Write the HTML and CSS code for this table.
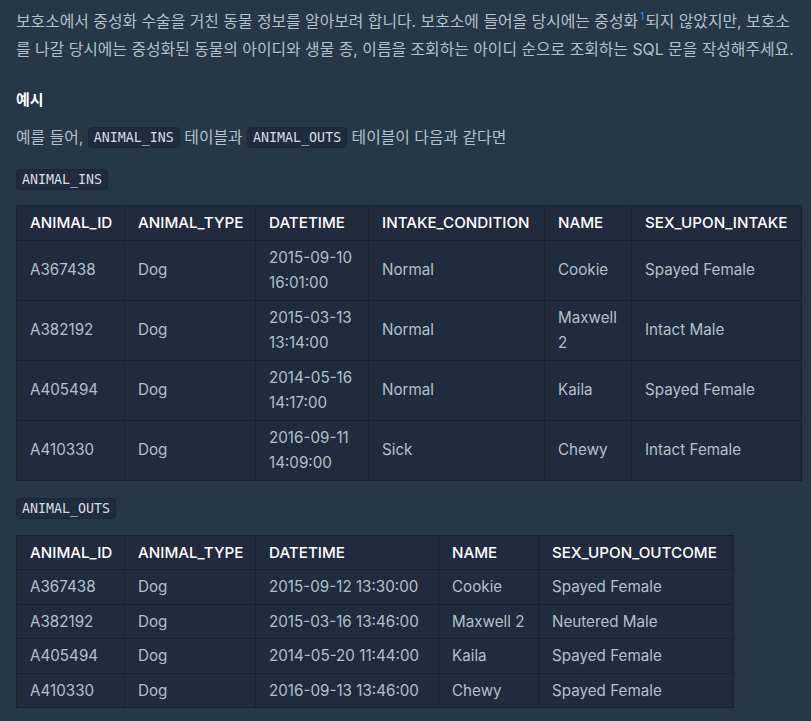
FILE: index.html
```html
<!DOCTYPE html>
<html lang="ko">
<head>
<meta charset="utf-8">
<link rel="stylesheet" href="styles.css">
</head>
<body>
<div class="guide">
  <p class="intro">보호소에서 중성화 수술을 거친 동물 정보를 알아보려 합니다. 보호소에 들어올 당시에는 중성화<sup class="fn">1</sup>되지 않았지만, 보호소를 나갈 당시에는 중성화된 동물의 아이디와 생물 종, 이름을 조회하는 아이디 순으로 조회하는 SQL 문을 작성해주세요.</p>
  <h5 class="example">예시</h5>
  <p class="lead">예를 들어, <code class="chip">ANIMAL_INS</code> 테이블과 <code class="chip">ANIMAL_OUTS</code> 테이블이 다음과 같다면</p>
  <p class="label"><code class="chip">ANIMAL_INS</code></p>
  <table class="data ins">
    <colgroup>
      <col style="width:108px"><col style="width:131px"><col style="width:113px"><col style="width:176px"><col style="width:87px"><col style="width:170px">
    </colgroup>
    <thead>
      <tr><th>ANIMAL_ID</th><th>ANIMAL_TYPE</th><th>DATETIME</th><th>INTAKE_CONDITION</th><th>NAME</th><th>SEX_UPON_INTAKE</th></tr>
    </thead>
    <tbody>
      <tr><td>A367438</td><td>Dog</td><td>2015-09-10 16:01:00</td><td>Normal</td><td>Cookie</td><td>Spayed Female</td></tr>
      <tr><td>A382192</td><td>Dog</td><td>2015-03-13 13:14:00</td><td>Normal</td><td>Maxwell 2</td><td>Intact Male</td></tr>
      <tr><td>A405494</td><td>Dog</td><td>2014-05-16 14:17:00</td><td>Normal</td><td>Kaila</td><td>Spayed Female</td></tr>
      <tr><td>A410330</td><td>Dog</td><td>2016-09-11 14:09:00</td><td>Sick</td><td>Chewy</td><td>Intact Female</td></tr>
    </tbody>
  </table>
  <p class="label label-outs"><code class="chip">ANIMAL_OUTS</code></p>
  <table class="data outs">
    <colgroup>
      <col style="width:108px"><col style="width:131px"><col style="width:183px"><col style="width:100px"><col style="width:195px">
    </colgroup>
    <thead>
      <tr><th>ANIMAL_ID</th><th>ANIMAL_TYPE</th><th>DATETIME</th><th>NAME</th><th>SEX_UPON_OUTCOME</th></tr>
    </thead>
    <tbody>
      <tr><td>A367438</td><td>Dog</td><td>2015-09-12 13:30:00</td><td>Cookie</td><td>Spayed Female</td></tr>
      <tr><td>A382192</td><td>Dog</td><td>2015-03-16 13:46:00</td><td>Maxwell 2</td><td>Neutered Male</td></tr>
      <tr><td>A405494</td><td>Dog</td><td>2014-05-20 11:44:00</td><td>Kaila</td><td>Spayed Female</td></tr>
      <tr><td>A410330</td><td>Dog</td><td>2016-09-13 13:46:00</td><td>Chewy</td><td>Spayed Female</td></tr>
    </tbody>
  </table>
</div>
</body>
</html>
```

FILE: styles.css
```css
html, body {
  margin: 0;
  background: #263747;
}
body {
  font-family: Inter, "Noto Sans CJK KR", sans-serif;
  color: #b2c0cc;
  font-size: 15.85px;
}
.guide {
  padding: 8px 10px 0 16px;
}
.intro {
  margin: 0;
  line-height: 28px;
}
.fn {
  color: #3d8bfd;
  font-size: 10px;
  line-height: 0;
  vertical-align: 7px;
  margin: 0 1px 0 2px;
}
.example {
  margin: 22px 0 0;
  font-size: 15px;
  line-height: 28px;
  font-weight: 700;
  color: #ffffff;
}
.lead {
  margin: 10px 0 0;
  line-height: 28px;
}
.label {
  margin: 14px 0 0;
  line-height: 28px;
}
.label-outs {
  margin-top: 14px;
}
.chip {
  font-family: "DejaVu Sans Mono", monospace;
  font-size: 13.3px;
  line-height: 19px;
  display: inline-block;
  padding: 0 5px;
  background: #202b3d;
  border: 1px solid #1b2636;
  border-radius: 4px;
  color: #d5dde5;
  vertical-align: 1px;
}
.data {
  border-collapse: collapse;
  table-layout: fixed;
  background: #202b3d;
  font-size: 15.2px;
  line-height: 25.5px;
  margin-top: 11px;
}
.data.ins { width: 785px; }
.data.outs { width: 717px; margin-top: 12px; }
.data th, .data td {
  border: 1px solid #172130;
  padding: 4px 10px 4px 13px;
  text-align: left;
  vertical-align: middle;
}
.data th {
  color: #ffffff;
  font-weight: 500;
}
```
